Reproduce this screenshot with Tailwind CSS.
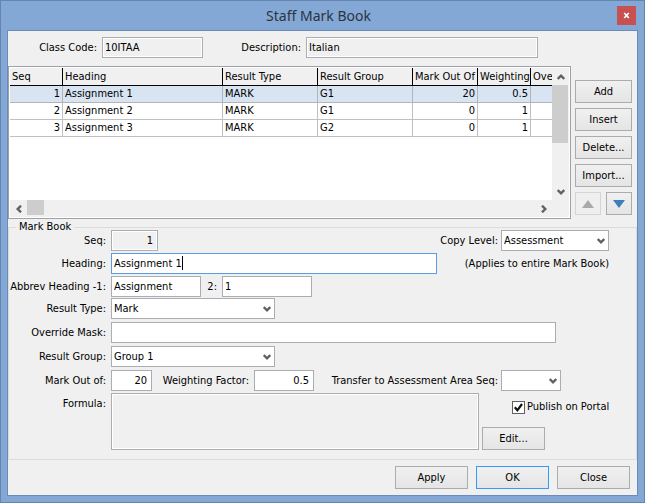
<!DOCTYPE html>
<html lang="en">
<head>
<meta charset="utf-8">
<title>Staff Mark Book</title>
<script src="https://cdn.jsdelivr.net/npm/@tailwindcss/browser@4"></script>
</head>
<body class="flex min-h-screen flex-col border border-[#6685ad] bg-[#84a8d6] font-['DejaVu_Sans_Condensed','DejaVu_Sans',sans-serif] text-[11px] leading-[14px] text-black">
<header class="grid h-[29px] grid-cols-[1fr_auto_1fr] items-center pr-2">
  <h1 class="col-start-2 font-['Noto_Sans',sans-serif] text-[14px] leading-5 text-[#2b3440]">Staff Mark Book</h1>
  <button aria-label="Close window" class="flex size-[19px] items-center justify-center justify-self-end bg-[#c75050]">
    <svg class="size-[7px]" viewBox="0 0 7 7" fill="none" stroke="#fff" stroke-width="1.7"><path d="M1.2 1l4.6 5M5.8 1L1.2 6"/></svg>
  </button>
</header>
<main class="mx-1.5 mb-1.5 flex grow flex-col border border-[#6b8cb8] bg-[#f0f0f0]">
  <div class="flex items-center pt-[6px]">
    <label for="code" class="w-[89px] text-right">Class Code:</label>
    <input id="code" readonly value="10ITAA" class="ml-[5px] h-[21px] w-[101px] border border-[#abadb3] bg-[#f0f0f0] px-[2px] shadow-[inset_0_0_0_1px_#fff] outline-none">
    <label for="desc" class="w-[98px] text-right">Description:</label>
    <input id="desc" readonly value="Italian" class="ml-[5px] mr-[99px] h-[21px] min-w-0 flex-1 border border-[#abadb3] bg-[#f0f0f0] px-[2px] shadow-[inset_0_0_0_1px_#fff] outline-none">
  </div>

  <div class="mt-2 flex gap-1 pr-[5px]">
    <div class="flex h-[153px] min-w-0 flex-1 flex-col border border-[#a0a0a8] bg-white p-px">
      <div class="flex min-h-0 flex-1">
        <div class="min-w-0 flex-1 overflow-hidden">
          <table class="w-full table-fixed border-separate border-spacing-0 whitespace-nowrap">
            <colgroup><col class="w-[53px]"><col><col class="w-[95px]"><col class="w-[95px]"><col class="w-[65px]"><col class="w-[53px]"><col class="w-[21px]"></colgroup>
            <thead class="bg-[#f0f0f0] text-left">
              <tr class="h-[18px] *:border-b *:border-r *:border-black *:p-0 *:pl-[2px] *:font-normal">
                <th>Seq</th><th>Heading</th><th>Result Type</th><th>Result Group</th><th>Mark Out Of</th><th>Weighting</th><th class="overflow-hidden border-r-0!">Override</th>
              </tr>
            </thead>
            <tbody>
              <tr class="h-[17px] bg-[#d8e4f1] *:border-b *:border-r *:border-[#b4b4b4] *:px-[2px] *:py-0">
                <td class="text-right">1</td><td>Assignment 1</td><td>MARK</td><td>G1</td><td class="text-right">20</td><td class="text-right">0.5</td><td class="border-r-0!"></td>
              </tr>
              <tr class="h-[17px] *:border-b *:border-r *:border-[#c0c0c0] *:px-[2px] *:py-0">
                <td class="text-right">2</td><td>Assignment 2</td><td>MARK</td><td>G1</td><td class="text-right">0</td><td class="text-right">1</td><td class="border-r-0!"></td>
              </tr>
              <tr class="h-[17px] *:border-b *:border-r *:border-[#c0c0c0] *:px-[2px] *:py-0">
                <td class="text-right">3</td><td>Assignment 3</td><td>MARK</td><td>G2</td><td class="text-right">0</td><td class="text-right">1</td><td class="border-r-0!"></td>
              </tr>
            </tbody>
          </table>
        </div>
        <div class="flex w-[17px] flex-col bg-[#f0f0f0]">
          <button aria-label="Scroll up" class="flex h-[17px] items-center justify-center"><svg class="h-[6px] w-[8px]" viewBox="0 0 8 6" fill="none" stroke="#606060" stroke-width="2.4"><path d="M.7 5L4 1.7 7.3 5"/></svg></button>
          <div class="mr-px h-[58px] bg-[#cdcdcd]"></div>
          <button aria-label="Scroll down" class="mt-auto flex h-[17px] items-center justify-center"><svg class="h-[6px] w-[8px]" viewBox="0 0 8 6" fill="none" stroke="#606060" stroke-width="2.4"><path d="M.7 1L4 4.3 7.3 1"/></svg></button>
        </div>
      </div>
      <div class="flex h-[17px] bg-[#f0f0f0] pr-[17px]">
        <button aria-label="Scroll left" class="flex w-[17px] items-center justify-center"><svg class="h-[8px] w-[6px]" viewBox="0 0 6 8" fill="none" stroke="#606060" stroke-width="2.4"><path d="M5 .7L1.7 4 5 7.3"/></svg></button>
        <div class="mb-[2px] w-[17px] bg-[#cdcdcd]"></div>
        <button aria-label="Scroll right" class="ml-auto flex w-[17px] items-center justify-center"><svg class="h-[8px] w-[6px]" viewBox="0 0 6 8" fill="none" stroke="#606060" stroke-width="2.4"><path d="M1 .7L4.3 4 1 7.3"/></svg></button>
      </div>
    </div>
    <div class="flex w-[57px] flex-col gap-[5px] pt-[14px]">
      <button class="h-[23px] border border-[#acacac] bg-linear-to-b from-[#f0f0f0] to-[#e5e5e5]">Add</button>
      <button class="h-[23px] border border-[#acacac] bg-linear-to-b from-[#f0f0f0] to-[#e5e5e5]">Insert</button>
      <button class="h-[23px] border border-[#acacac] bg-linear-to-b from-[#f0f0f0] to-[#e5e5e5]">Delete...</button>
      <button class="h-[23px] border border-[#acacac] bg-linear-to-b from-[#f0f0f0] to-[#e5e5e5]">Import...</button>
      <div class="flex justify-between">
        <button disabled aria-label="Move up" class="flex h-[23px] w-[26px] items-center justify-center border border-[#d5d5d5] bg-[#efefef]"><svg class="h-[8px] w-[12px]" viewBox="0 0 12 8"><path d="M6 0l6 8H0z" fill="#a9a9a9"/></svg></button>
        <button aria-label="Move down" class="flex h-[23px] w-[26px] items-center justify-center border border-[#acacac] bg-linear-to-b from-[#f0f0f0] to-[#e5e5e5]"><svg class="h-[8px] w-[12px]" viewBox="0 0 12 8"><path d="M0 0h12L6 8z" fill="#3f7dbf"/></svg></button>
      </div>
    </div>
  </div>

  <fieldset class="mt-px border border-[#dcdcdc] pb-[9px]">
    <legend class="ml-[7px] px-[3px]">Mark Book</legend>
    <div class="-mt-1 flex items-center">
      <label for="seq" class="w-[97px] text-right">Seq:</label>
      <input id="seq" readonly value="1" class="ml-[5px] h-[21px] w-[47px] border border-[#abadb3] bg-[#f0f0f0] px-[4px] text-right shadow-[inset_0_0_0_1px_#fff] outline-none">
      <label for="copy" class="ml-auto">Copy Level:</label>
      <div class="relative ml-[3px] mr-[27px]">
        <select id="copy" class="block h-[21px] w-[108px] appearance-none border border-[#abadb3] bg-white px-[2px]"><option>Assessment</option></select>
        <svg class="pointer-events-none absolute right-[4px] top-[8px] h-[6px] w-[8px]" viewBox="0 0 8 6" fill="none" stroke="#606060" stroke-width="2.4"><path d="M.7 1L4 4.3 7.3 1"/></svg>
      </div>
    </div>
    <div class="mt-[2px] flex items-center">
      <label for="heading" class="w-[97px] text-right">Heading:</label>
      <div class="relative ml-[5px]">
        <input id="heading" value="Assignment 1" class="block h-[21px] w-[326px] border border-[#569de5] bg-white px-[2px] outline-none">
        <span class="absolute left-[71px] top-[3px] h-[14px] w-px bg-black"></span>
      </div>
      <span class="ml-auto mr-[27px]">(Applies to entire Mark Book)</span>
    </div>
    <div class="mt-[2px] flex items-center">
      <label for="ab1" class="w-[97px] text-right">Abbrev Heading -1:</label>
      <input id="ab1" value="Assignment" class="ml-[5px] h-[21px] w-[90px] border border-[#abadb3] bg-white px-[2px]">
      <label for="ab2" class="w-[16px] text-right">2:</label>
      <input id="ab2" value="1" class="ml-[5px] h-[21px] w-[90px] border border-[#abadb3] bg-white px-[2px]">
    </div>
    <div class="mt-px flex items-center">
      <label for="type" class="w-[97px] text-right">Result Type:</label>
      <div class="relative ml-[5px]">
        <select id="type" class="block h-[21px] w-[164px] appearance-none border border-[#abadb3] bg-white px-[2px]"><option>Mark</option></select>
        <svg class="pointer-events-none absolute right-[4px] top-[8px] h-[6px] w-[8px]" viewBox="0 0 8 6" fill="none" stroke="#606060" stroke-width="2.4"><path d="M.7 1L4 4.3 7.3 1"/></svg>
      </div>
    </div>
    <div class="mt-[3px] flex items-center">
      <label for="mask" class="w-[97px] text-right">Override Mask:</label>
      <input id="mask" class="ml-[5px] mr-[80px] h-[21px] min-w-0 flex-1 border border-[#abadb3] bg-white px-[2px]">
    </div>
    <div class="mt-[3px] flex items-center">
      <label for="group" class="w-[97px] text-right">Result Group:</label>
      <div class="relative ml-[5px]">
        <select id="group" class="block h-[21px] w-[164px] appearance-none border border-[#abadb3] bg-white px-[2px]"><option>Group 1</option></select>
        <svg class="pointer-events-none absolute right-[4px] top-[8px] h-[6px] w-[8px]" viewBox="0 0 8 6" fill="none" stroke="#606060" stroke-width="2.4"><path d="M.7 1L4 4.3 7.3 1"/></svg>
      </div>
    </div>
    <div class="mt-[3px] flex items-center whitespace-nowrap">
      <label for="out" class="w-[97px] text-right">Mark Out of:</label>
      <input id="out" value="20" class="ml-[5px] h-[21px] w-[41px] border border-[#abadb3] bg-white px-[4px] text-right">
      <label for="weight" class="w-[97px] text-right">Weighting Factor:</label>
      <input id="weight" value="0.5" class="ml-[5px] h-[21px] w-[60px] border border-[#abadb3] bg-white px-[4px] text-right">
      <label for="area" class="w-[184px] text-right">Transfer to Assessment Area Seq:</label>
      <div class="relative ml-[3px]">
        <select id="area" class="block h-[21px] w-[60px] appearance-none border border-[#abadb3] bg-white px-[2px]"><option></option></select>
        <svg class="pointer-events-none absolute right-[4px] top-[8px] h-[6px] w-[8px]" viewBox="0 0 8 6" fill="none" stroke="#606060" stroke-width="2.4"><path d="M.7 1L4 4.3 7.3 1"/></svg>
      </div>
    </div>
    <div class="mt-[2px] flex">
      <label for="formula" class="w-[97px] pt-[4px] text-right">Formula:</label>
      <textarea id="formula" readonly class="ml-[5px] block h-[57px] min-w-0 flex-1 resize-none border border-[#abadb3] bg-[#f0f0f0] shadow-[inset_0_0_0_1px_#fff] outline-none"></textarea>
      <div class="ml-[3px] flex w-[154px] flex-col items-start justify-between pt-[7px]">
        <label class="ml-[30px] flex items-center gap-[2px] whitespace-nowrap">
          <span class="relative size-[13px]">
            <input type="checkbox" checked class="peer block size-[13px] appearance-none border border-[#606060] bg-white">
            <svg class="pointer-events-none absolute inset-0 hidden size-[13px] peer-checked:block" viewBox="0 0 13 13" fill="none" stroke="#111" stroke-width="2.2"><path d="M2.8 6.3l2.6 3L10 3"/></svg>
          </span>
          Publish on Portal
        </label>
        <button class="h-[23px] w-[63px] border border-[#acacac] bg-linear-to-b from-[#f0f0f0] to-[#e5e5e5]">Edit...</button>
      </div>
    </div>
  </fieldset>

  <footer class="flex justify-end gap-2 pb-[6px] pr-[7px] pt-[6px]">
    <button class="h-[23px] w-[73px] border border-[#acacac] bg-linear-to-b from-[#f0f0f0] to-[#e5e5e5]">Apply</button>
    <button class="h-[23px] w-[73px] border border-[#3399ff] bg-linear-to-b from-[#f0f0f0] to-[#e5e5e5]">OK</button>
    <button class="h-[23px] w-[73px] border border-[#acacac] bg-linear-to-b from-[#f0f0f0] to-[#e5e5e5]">Close</button>
  </footer>
</main>
</body>
</html>
